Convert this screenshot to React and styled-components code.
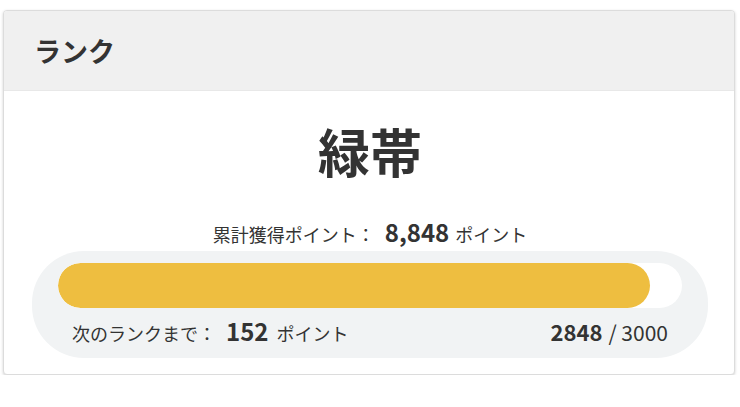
import React from "react";
import styled, { createGlobalStyle } from "styled-components";

const Global = createGlobalStyle`
  html, body { margin: 0; padding: 0; background: #fff; }
  body { font-family: "Noto Sans CJK JP", "Noto Sans", sans-serif; color: #333; }
`;

const Card = styled.section`
  margin: 10px 5px 0 3px;
  border: 1px solid #dcdcdc;
  border-radius: 4px;
  box-shadow: 0 1px 3px rgba(0, 0, 0, 0.18);
  background: #fff;
  overflow: hidden;
`;

const Header = styled.header`
  height: 79px;
  background: #f0f0f0;
  border-bottom: 1px solid #e8e8e8;
  display: flex;
  align-items: center;
  padding: 0 30px;
  font-size: 27px;
  font-weight: 700;
  color: #333;
`;

const Body = styled.div`
  display: flex;
  flex-direction: column;
  align-items: center;
  padding: 24px 26px 16px 28px;
`;

const Title = styled.h2`
  margin: 0;
  font-size: 52px;
  font-weight: 700;
  line-height: 72px;
  color: #333;
`;

const Total = styled.p`
  margin: 32px 0 0;
  font-size: 18px;
  line-height: 26px;
  display: flex;
  align-items: baseline;
`;

const Strong = styled.b`
  font-size: ${(p) => p.size || 24}px;
  font-weight: 700;
  margin: ${(p) => p.m || "0 6px 0 10px"};
`;

const Pill = styled.div`
  align-self: stretch;
  margin-top: 4px;
  background: #f1f3f4;
  border-radius: 52px;
  padding: 12px 26px 9px;
`;

const Track = styled.div`
  height: 45px;
  border-radius: 23px;
  background: #fff;
  overflow: hidden;
`;

const Fill = styled.div`
  height: 100%;
  border-radius: 23px;
  background: #eebe40;
`;

const Row = styled.div`
  display: flex;
  justify-content: space-between;
  align-items: baseline;
  padding: 7px 14px 0 14px;
  font-size: 18px;
  line-height: 32px;
`;

const Part = styled.span`
  display: flex;
  align-items: baseline;
`;

const Fraction = styled.span`
  font-size: 21px;
`;

export default function App() {
  const cur = 2848;
  const max = 3000;
  return (
    <>
      <Global />
      <Card>
        <Header>ランク</Header>
        <Body>
          <Title>緑帯</Title>
          <Total>
            累計獲得ポイント：<Strong>8,848</Strong>ポイント
          </Total>
          <Pill>
            <Track>
              <Fill style={{ width: `${(cur / max) * 100}%` }} />
            </Track>
            <Row>
              <Part>
                次のランクまで：<Strong m="0 8px 0 10px">152</Strong>ポイント
              </Part>
              <Part>
                <Strong size={22} m="0 6px 0 0">2848</Strong>
                <Fraction>/ 3000</Fraction>
              </Part>
            </Row>
          </Pill>
        </Body>
      </Card>
    </>
  );
}
